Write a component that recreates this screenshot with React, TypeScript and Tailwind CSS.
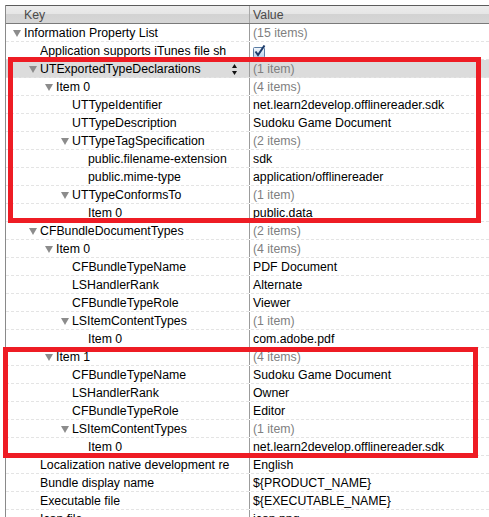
import React from "react";

type Row = {
  key: string;
  value: string;
  level: 0 | 1 | 2 | 3 | 4;
  open?: boolean;
  muted?: boolean;
  check?: boolean;
  selected?: boolean;
};

const ROWS: Row[] = [
  { key: "Information Property List", value: "(15 items)", level: 0, open: true, muted: true },
  { key: "Application supports iTunes file sh", value: "", level: 1, check: true },
  { key: "UTExportedTypeDeclarations", value: "(1 item)", level: 1, open: true, muted: true, selected: true },
  { key: "Item 0", value: "(4 items)", level: 2, open: true, muted: true },
  { key: "UTTypeIdentifier", value: "net.learn2develop.offlinereader.sdk", level: 3 },
  { key: "UTTypeDescription", value: "Sudoku Game Document", level: 3 },
  { key: "UTTypeTagSpecification", value: "(2 items)", level: 3, open: true, muted: true },
  { key: "public.filename-extension", value: "sdk", level: 4 },
  { key: "public.mime-type", value: "application/offlinereader", level: 4 },
  { key: "UTTypeConformsTo", value: "(1 item)", level: 3, open: true, muted: true },
  { key: "Item 0", value: "public.data", level: 4 },
  { key: "CFBundleDocumentTypes", value: "(2 items)", level: 1, open: true, muted: true },
  { key: "Item 0", value: "(4 items)", level: 2, open: true, muted: true },
  { key: "CFBundleTypeName", value: "PDF Document", level: 3 },
  { key: "LSHandlerRank", value: "Alternate", level: 3 },
  { key: "CFBundleTypeRole", value: "Viewer", level: 3 },
  { key: "LSItemContentTypes", value: "(1 item)", level: 3, open: true, muted: true },
  { key: "Item 0", value: "com.adobe.pdf", level: 4 },
  { key: "Item 1", value: "(4 items)", level: 2, open: true, muted: true },
  { key: "CFBundleTypeName", value: "Sudoku Game Document", level: 3 },
  { key: "LSHandlerRank", value: "Owner", level: 3 },
  { key: "CFBundleTypeRole", value: "Editor", level: 3 },
  { key: "LSItemContentTypes", value: "(1 item)", level: 3, open: true, muted: true },
  { key: "Item 0", value: "net.learn2develop.offlinereader.sdk", level: 4 },
  { key: "Localization native development re", value: "English", level: 1 },
  { key: "Bundle display name", value: "${PRODUCT_NAME}", level: 1 },
  { key: "Executable file", value: "${EXECUTABLE_NAME}", level: 1 },
  { key: "Icon file", value: "icon.png", level: 1 },
];

// padding before the 11px triangle slot, per nesting level
const INDENT = ["pl-[7px]", "pl-[23px]", "pl-[39px]", "pl-[55px]", "pl-[71px]"];

function Disclosure() {
  return (
    <svg width="8" height="7" viewBox="0 0 8 7" className="shrink-0">
      <path d="M0 0 H8 L4 7 Z" fill="#8c8c8c" />
    </svg>
  );
}

function SortArrows() {
  return (
    <svg width="5" height="11" viewBox="0 0 5 11" className="mr-[12px] shrink-0">
      <path d="M2.5 0 L5 4 H0 Z" fill="#111" />
      <path d="M0 7 H5 L2.5 11 Z" fill="#111" />
    </svg>
  );
}

function CheckBox() {
  return (
    <svg width="13" height="13" viewBox="0 0 13 13">
      <defs>
        <linearGradient id="cb" x1="0" y1="0" x2="0" y2="1">
          <stop offset="0" stopColor="#f4f8fc" />
          <stop offset="1" stopColor="#b8d2ec" />
        </linearGradient>
      </defs>
      <rect x="0.5" y="2.5" width="11" height="10" rx="1" fill="url(#cb)" stroke="#5b7da4" />
      <path d="M2.5 6.5 L5 10 L11.5 0.5" fill="none" stroke="#1d3c6b" strokeWidth="2" />
    </svg>
  );
}

export default function App() {
  return (
    <div
      className="relative h-[517px] w-[489px] overflow-hidden bg-white text-[12.3px] text-black"
      style={{ fontFamily: '"Liberation Sans", Arial, sans-serif' }}
    >
      <div className="ml-[5px] mt-[5px] border-l border-[#8a8a8a]">
        {/* header */}
        <div className="flex h-[19px] border-b border-t border-b-[#7a7a7a] border-t-[#5c5c5c] bg-[linear-gradient(#ececec_0%,#e6e6e6_45%,#d3d3d3_50%,#d6d6d6_100%)] pt-[1px] leading-[16px] text-[#4a4a4a]">
          <div className="w-[243px] shrink-0 pl-[18px]">Key</div>
          <div className="-mt-[1px] w-px shrink-0 bg-[#a8a8a8]" />
          <div className="flex-1 pl-[3px]">Value</div>
        </div>

        {ROWS.map((row, i) => (
          <div
            key={i}
            className={`flex h-[18px] border-b border-dashed border-[#e4e4e4] leading-[16px] ${
              row.selected ? "bg-[#dcdcdc]" : ""
            }`}
          >
            <div
              className={`flex w-[243px] shrink-0 items-center overflow-hidden whitespace-nowrap pt-[1px] ${INDENT[row.level]}`}
            >
              <span className="flex w-[11px] shrink-0 items-center">{row.open && <Disclosure />}</span>
              <span className="flex-1 overflow-hidden">{row.key}</span>
              {row.selected && <SortArrows />}
            </div>
            <div className="w-px shrink-0 bg-[#9c9c9c]" />
            <div
              className={`flex flex-1 items-center overflow-hidden whitespace-nowrap pl-[3px] pt-[1px] ${
                row.muted ? "text-[#7f7f7f]" : ""
              }`}
            >
              {row.check ? <CheckBox /> : row.value}
            </div>
          </div>
        ))}
      </div>

      {/* highlight boxes drawn over the table */}
      <div className="absolute left-[8px] top-[57px] h-[166px] w-[473px] border-[5px] border-[#ee1c24]" />
      <div className="absolute left-[3px] top-[347px] h-[111px] w-[475px] border-[5px] border-[#ee1c24]" />
    </div>
  );
}
